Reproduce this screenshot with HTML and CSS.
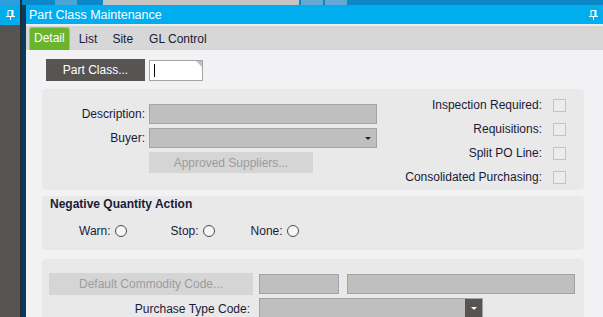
FILE: index.html
```html
<!DOCTYPE html>
<html lang="en">
<head>
    <meta charset="UTF-8">
    <title>Part Class Maintenance</title>
    <link rel="stylesheet" href="styles.css">
</head>
<body>
    <div class="topstrip">
        <span class="ts-a"></span><span class="ts-b"></span><span class="ts-c"></span><span class="ts-d"></span><span class="ts-e"></span><span class="ts-f"></span><span class="ts-g"></span><span class="ts-g"></span>
    </div>
    <div class="main">
        <div class="sidebar">
            <div class="side-head">
                <svg class="pin" width="9" height="10" viewBox="0 0 9 10"><path d="M2 0.5h4.5v5.5" fill="none" stroke="#fff"/><path d="M2 0.5v5.5" stroke="#fff"/><rect x="5.5" y="0" width="2" height="6" fill="#fff"/><path d="M0 6.5h9M4.5 6.5v3.5" stroke="#fff"/></svg>
            </div>
        </div>
        <div class="divider"></div>
        <div class="window">
            <div class="titlebar">
                <span>Part Class Maintenance</span>
                <svg class="pin" width="9" height="10" viewBox="0 0 9 10"><path d="M2 0.5h4.5v5.5" fill="none" stroke="#fff"/><path d="M2 0.5v5.5" stroke="#fff"/><rect x="5.5" y="0" width="2" height="6" fill="#fff"/><path d="M0 6.5h9M4.5 6.5v3.5" stroke="#fff"/></svg>
            </div>
            <div class="tabs">
                <div class="tab active">Detail</div>
                <div class="tab list">List</div>
                <div class="tab site">Site</div>
                <div class="tab gl">GL Control</div>
            </div>
            <div class="content">
                <div class="key-row">
                    <button class="btn-dark">Part Class...</button>
                    <div class="input key-input"><span class="caret"></span><span class="corner"></span></div>
                </div>

                <div class="panel panel-main">
                    <div class="form-left">
                        <div class="row">
                            <label class="lbl">Description:</label>
                            <div class="field wide"></div>
                        </div>
                        <div class="row">
                            <label class="lbl">Buyer:</label>
                            <div class="field wide combo"><span class="arrow"></span></div>
                        </div>
                        <div class="row">
                            <span class="lbl"></span>
                            <button class="btn-disabled approved">Approved Suppliers...</button>
                        </div>
                    </div>
                    <div class="form-right">
                        <div class="check-row"><label>Inspection Required:</label><span class="check"></span></div>
                        <div class="check-row"><label>Requisitions:</label><span class="check"></span></div>
                        <div class="check-row"><label>Split PO Line:</label><span class="check"></span></div>
                        <div class="check-row"><label>Consolidated Purchasing:</label><span class="check"></span></div>
                    </div>
                </div>

                <div class="panel panel-neg">
                    <div class="panel-title">Negative Quantity Action</div>
                    <div class="radios">
                        <div class="radio-item"><label>Warn:</label><span class="radio"></span></div>
                        <div class="radio-item stop"><label>Stop:</label><span class="radio"></span></div>
                        <div class="radio-item none"><label>None:</label><span class="radio"></span></div>
                    </div>
                </div>

                <div class="panel panel-commodity">
                    <div class="row">
                        <button class="btn-disabled commodity">Default Commodity Code...</button>
                        <div class="field code"><span class="corner"></span></div>
                        <div class="field code-desc"></div>
                    </div>
                    <div class="row">
                        <label class="lbl lbl-wide">Purchase Type Code:</label>
                        <div class="field purchase"><span class="drop-btn"><span class="arrow light"></span></span></div>
                    </div>
                </div>
            </div>
        </div>
    </div>
</body>
</html>
```

FILE: styles.css
```css
* {
    box-sizing: border-box;
}
body {
    margin: 0;
    height: 317px;
    overflow: hidden;
    background-color: #f2f2f4;
    font-family: "Liberation Sans", Arial, sans-serif;
    font-size: 12px;
    color: #1a1a38;
}
.topstrip {
    display: flex;
    height: 5px;
    background: #0a88c8;
}
.ts-a { width: 20px; background: #2d9fdc; }
.ts-b { width: 2px; background: #0d3550; }
.ts-c { width: 33px; }
.ts-d { width: 22px; background: #4aa4d6; }
.ts-e { width: 2px; }
.ts-f { width: 196px; margin-left: 24px; background: #c4c4c4; }
.ts-g { width: 22px; margin-left: 2px; background: #62aad4; }

.main {
    display: flex;
    height: 312px;
}
.sidebar {
    width: 20px;
    background: #565452;
}
.side-head {
    height: 20px;
    background: #00acec;
    display: flex;
    align-items: center;
    justify-content: center;
}
.divider {
    width: 6px;
    background: #0d3a5a;
    border-left: 2px solid #2a2a2a;
}
.window {
    flex: 1;
    min-width: 0;
    display: flex;
    flex-direction: column;
}
.titlebar {
    flex-shrink: 0;
    height: 19px;
    background: #00adef;
    color: #fff;
    font-size: 12.5px;
    padding: 0 5px 0 3px;
    display: flex;
    align-items: center;
    justify-content: space-between;
}
.tabs {
    flex-shrink: 0;
    height: 26px;
    background: #d7d7d7;
    border-top: 2px solid #ececec;
    display: flex;
    align-items: flex-end;
    padding-left: 3px;
}
.tab {
    height: 23px;
    line-height: 24px;
}
.tab.active {
    background: #6ab42e;
    color: #fff;
    border: 1px solid #96d35e;
    border-bottom: none;
    border-radius: 3px 3px 0 0;
    padding: 0 4px;
    line-height: 20px;
}
.tab.list { margin-left: 9px; }
.tab.site { margin-left: 15px; }
.tab.gl { margin-left: 16px; }

.content {
    flex: 1;
    min-height: 0;
    overflow: hidden;
    padding: 9px 19px 0 16px;
}
.key-row {
    display: flex;
    align-items: flex-start;
    gap: 4px;
    margin-left: 4px;
    margin-bottom: 8px;
}
button {
    font-family: inherit;
    font-size: 12px;
    border: none;
    padding: 0;
}
.btn-dark {
    width: 99px;
    height: 22px;
    background: #575452;
    color: #fff;
}
.input {
    position: relative;
    background: #fff;
    border: 1px solid #a4a4a4;
}
.key-input {
    width: 54px;
    height: 21px;
    margin-top: 1px;
}
.caret {
    position: absolute;
    left: 4px;
    top: 3px;
    width: 1px;
    height: 13px;
    background: #000;
}
.corner {
    position: absolute;
    right: 0;
    top: 0;
    border-top: 6px solid #a6c4e4;
    border-left: 6px solid transparent;
}

.panel {
    background: #e9e9e9;
    border-radius: 4px;
}
.panel-main {
    height: 101px;
    display: flex;
    justify-content: space-between;
    margin-bottom: 6px;
}
.form-left {
    padding-top: 15px;
    display: flex;
    flex-direction: column;
    gap: 4px;
}
.row {
    display: flex;
    align-items: center;
    gap: 4px;
}
.lbl {
    width: 103px;
    text-align: right;
}
.field {
    position: relative;
    height: 20px;
    background: #bfbfbf;
    border: 1px solid #a3a3a3;
}
.wide {
    width: 228px;
}
.combo .arrow {
    position: absolute;
    right: 5px;
    top: 8px;
}
.arrow {
    display: block;
    border-top: 3px solid #222;
    border-left: 3px solid transparent;
    border-right: 3px solid transparent;
}
.arrow.light {
    border-top-color: #fff;
}
.btn-disabled {
    background: #d5d5d5;
    color: #9c9c9c;
}
.approved {
    width: 164px;
    height: 21px;
}
.form-right {
    padding: 4px 18px 0 0;
}
.check-row {
    height: 24px;
    display: flex;
    align-items: center;
    justify-content: flex-end;
    gap: 11px;
}
.check {
    width: 13px;
    height: 13px;
    border: 1px solid #c4c4c4;
    background: #ececec;
}

.panel-neg {
    height: 54px;
    padding: 1px 8px 0;
    margin-bottom: 9px;
}
.panel-title {
    font-weight: bold;
    line-height: 14px;
}
.radios {
    display: flex;
    align-items: center;
    margin-top: 13px;
    padding-left: 29px;
}
.radio-item {
    display: flex;
    align-items: center;
    gap: 4px;
}
.radio-item.stop { margin-left: 44px; }
.radio-item.none { margin-left: 36px; }
.radio {
    width: 12px;
    height: 12px;
    border-radius: 50%;
    border: 1px solid #4a4a4a;
    background: #f6f6f6;
}

.panel-commodity {
    height: 70px;
    padding: 14px 8px 0 7px;
    display: flex;
    flex-direction: column;
    gap: 3px;
}
.panel-commodity .row {
    gap: 0;
}
.commodity {
    width: 204px;
    height: 22px;
    margin-right: 6px;
}
.code {
    width: 80px;
    margin-right: 8px;
}
.code-desc {
    width: 228px;
}
.lbl-wide {
    width: 201px;
    margin-right: 9px;
}
.purchase {
    width: 224px;
    height: 21px;
}
.drop-btn {
    position: absolute;
    right: 0;
    top: 0;
    bottom: 0;
    width: 17px;
    background: #575452;
    display: flex;
    align-items: center;
    justify-content: center;
}
```
